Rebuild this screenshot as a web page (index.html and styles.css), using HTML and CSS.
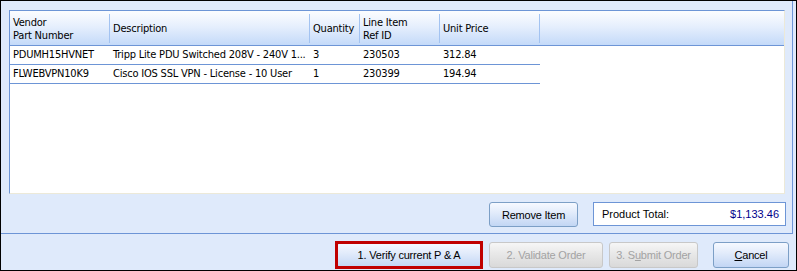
FILE: index.html
```html
<!DOCTYPE html>
<html lang="en">
<head>
  <meta charset="UTF-8">
  <title>Order Items</title>
  <link rel="stylesheet" href="styles.css">
</head>
<body>
  <div class="window">
    <div class="main">
      <div class="grid">
        <div class="grid-head">
          <div class="hcell c1">Vendor<br>Part Number</div>
          <div class="hcell c2">Description</div>
          <div class="hcell c3">Quantity</div>
          <div class="hcell c4">Line Item<br>Ref ID</div>
          <div class="hcell c5">Unit Price</div>
        </div>
        <div class="row">
          <div class="cell c1">PDUMH15HVNET</div>
          <div class="cell c2">Tripp Lite PDU Switched 208V - 240V 1...</div>
          <div class="cell c3">3</div>
          <div class="cell c4">230503</div>
          <div class="cell c5">312.84</div>
        </div>
        <div class="row">
          <div class="cell c1">FLWEBVPN10K9</div>
          <div class="cell c2">Cisco IOS SSL VPN - License - 10 User</div>
          <div class="cell c3">1</div>
          <div class="cell c4">230399</div>
          <div class="cell c5">194.94</div>
        </div>
      </div>

      <div class="actions">
        <button class="btn btn-remove">Remove Item</button>
        <div class="total">
          <span>Product Total:</span>
          <span class="amount">$1,133.46</span>
        </div>
      </div>
    </div>

    <div class="footer">
      <button class="btn btn-verify highlight">1. Verify current P &amp; A</button>
      <button class="btn btn-validate" disabled>2. Validate Order</button>
      <button class="btn btn-submit" disabled>3. S<u>u</u>bmit Order</button>
      <button class="btn btn-cancel"><u>C</u>ancel</button>
    </div>
  </div>
</body>
</html>
```

FILE: styles.css
```css
body {
  margin: 0;
  font-family: "DejaVu Sans", sans-serif;
  font-stretch: condensed;
  font-size: 11px;
  color: #000;
}
.window {
  width: 797px;
  height: 271px;
  box-sizing: border-box;
  border: 1px solid #000;
  background: #dfeafb;
}
.main {
  height: 233px;
  box-sizing: border-box;
  margin-right: 3px;
  padding: 9px 6px 6px 8px;
  border-right: 1px solid #6d95d6;
  border-bottom: 1px solid #6d95d6;
}
.grid {
  width: 776px;
  height: 184px;
  box-sizing: border-box;
  background: #fff;
  border-top: 1px solid #6d95d6;
  border-left: 1px solid #6d95d6;
  border-right: 1px solid #ece9d8;
  border-bottom: 1px solid #ece9d8;
  letter-spacing: -0.2px;
}
.grid-head {
  display: flex;
  height: 34px;
  border-bottom: 1px solid #6d95d6;
  background: linear-gradient(#fcfdff, #e6effd 45%, #c4daf9);
}
.hcell {
  display: flex;
  align-items: center;
  box-sizing: border-box;
  padding-left: 3px;
  line-height: 13px;
  margin: 3px 0 2px;
  border-right: 1px solid #a3c3f1;
}
.c1 { width: 100px; }
.c2 { width: 200px; }
.c3 { width: 50px; }
.c4 { width: 80px; }
.c5 { width: 100px; }
.row {
  display: flex;
  width: 530px;
  height: 18px;
  line-height: 18px;
  border-bottom: 1px solid #6d95d6;
}
.cell {
  box-sizing: border-box;
  padding-left: 3px;
  white-space: nowrap;
}
.actions {
  display: flex;
  justify-content: flex-end;
  align-items: flex-start;
  gap: 15px;
  margin-top: 8px;
}
.btn {
  height: 26px;
  box-sizing: border-box;
  padding: 0;
  border: 1px solid #7c9fc6;
  border-radius: 3px;
  background: linear-gradient(#f6f9ff, #e3ecfb 40%, #c2d6f4);
  font-family: "Liberation Sans", Arial, sans-serif;
  font-size: 11px;
  letter-spacing: -0.2px;
  color: #000;
}
.btn:disabled {
  border-color: #c8c8c8;
  background: linear-gradient(#f6f6f6, #e8e8e8 45%, #d9d9d9);
  color: #a3a3a3;
}
.btn-remove { width: 89px; height: 25px; }
.total {
  display: flex;
  justify-content: space-between;
  align-items: center;
  width: 193px;
  height: 24px;
  box-sizing: border-box;
  padding: 0 6px 0 8px;
  border: 1px solid #6d95d6;
  background: #fff;
  font-family: "Liberation Sans", Arial, sans-serif;
  font-size: 11px;
}
.amount { color: #00008b; }
.footer {
  display: flex;
  justify-content: flex-end;
  padding: 8px 7px 0 0;
}
.btn-verify { width: 144px; margin-right: 8px; }
.btn-validate { width: 114px; margin-right: 6px; }
.btn-submit { width: 89px; margin-right: 15px; }
.btn-cancel { width: 76px; }
.highlight {
  position: relative;
}
.highlight::after {
  content: "";
  position: absolute;
  inset: -2px -3px;
  border: 3px solid #c00000;
}
```
